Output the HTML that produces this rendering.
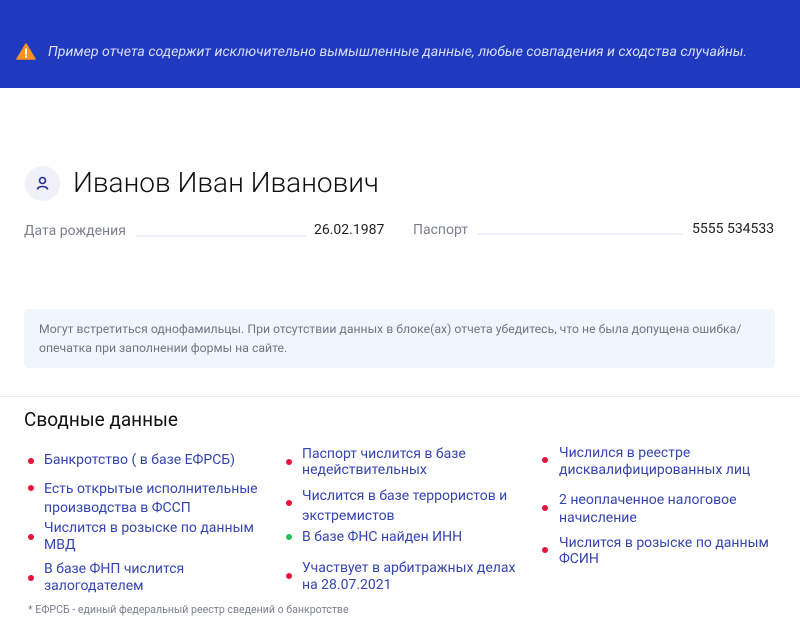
<!DOCTYPE html><html><head><meta charset="utf-8"><style>
*{margin:0;padding:0;box-sizing:border-box}
body{width:800px;height:631px;background:#fff;font-family:Roboto,"Liberation Sans",sans-serif;position:relative;overflow:hidden}
.a{position:absolute;white-space:nowrap}
.l{font-size:14px;color:#3444b0;line-height:18px}
.d{position:absolute;width:6px;height:6px;border-radius:50%;background:#e8123c}
</style></head><body>
<div class="a" style="left:0;top:0;width:800px;height:88px;background:#1f3abe"></div>
<svg class="a" style="left:16px;top:43px" width="20" height="17" viewBox="0 0 20 17"><path d="M10 1 L19 16 L1 16 Z" fill="#f7931e" stroke="#f7931e" stroke-linejoin="round" stroke-width="1.5"/><rect x="9" y="5.5" width="2" height="6" fill="#fff"/><rect x="9" y="12.5" width="2" height="2" fill="#fff"/></svg>
<div class="a" style="left:48px;top:44px;font-size:14.15px;font-style:italic;color:#d8defa">Пример отчета содержит исключительно вымышленные данные, любые совпадения и сходства случайны.</div>
<div class="a" style="left:25px;top:166px;width:35px;height:35px;border-radius:50%;background:#f0f1f8"></div>
<svg class="a" style="left:34px;top:175px" width="17" height="17" viewBox="0 0 17 17"><circle cx="8.5" cy="5.5" r="3" fill="none" stroke="#2a2a9a" stroke-width="1.6"/><path d="M3.5 14.5 C3.5 10.5 13.5 10.5 13.5 14.5" fill="none" stroke="#2a2a9a" stroke-width="1.6"/></svg>
<div class="a" style="left:73px;top:166px;font-size:28px;font-weight:300;color:#111;line-height:34px">Иванов Иван Иванович</div>
<div class="a" style="left:24px;top:223px;font-size:14px;color:#7a7f8c">Дата рождения</div>
<div class="a" style="left:136px;top:235px;width:170px;height:2px;background:#eef0fa"></div>
<div class="a" style="left:314px;top:222px;font-size:14px;color:#222">26.02.1987</div>
<div class="a" style="left:413px;top:222px;font-size:14px;color:#7a7f8c">Паспорт</div>
<div class="a" style="left:478px;top:233px;width:205px;height:2px;background:#eef0fa"></div>
<div class="a" style="left:692px;top:221px;font-size:14px;color:#222">5555 534533</div>
<div class="a" style="left:24px;top:309px;width:751px;height:59px;background:#eff6fe;border-radius:4px"></div>
<div class="a" style="left:39px;top:320px;font-size:12.25px;color:#6f7584;line-height:19px">Могут встретиться однофамильцы. При отсутствии данных в блоке(ах) отчета убедитесь, что не была допущена ошибка/<br>опечатка при заполнении формы на сайте.</div>
<div class="a" style="left:0;top:396px;width:800px;height:1px;background:#ececf0"></div>
<div class="a" style="left:24px;top:408px;font-size:19px;color:#111;line-height:24px">Сводные данные</div>

<div class="d" style="left:28px;top:458px"></div>
<div class="a l" style="left:44px;top:451px">Банкротство ( в базе ЕФРСБ)</div>
<div class="d" style="left:28px;top:485px"></div>
<div class="a l" style="left:44px;top:480px">Есть открытые исполнительные</div>
<div class="a l" style="left:44px;top:499px">производства в ФССП</div>
<div class="d" style="left:28px;top:534px"></div>
<div class="a l" style="left:44px;top:519px">Числится в розыске по данным</div>
<div class="a l" style="left:44px;top:536px">МВД</div>
<div class="d" style="left:28px;top:575px"></div>
<div class="a l" style="left:44px;top:560px">В базе ФНП числится</div>
<div class="a l" style="left:44px;top:577px">залогодателем</div>

<div class="d" style="left:286px;top:459px"></div>
<div class="a l" style="left:302px;top:445px">Паспорт числится в базе</div>
<div class="a l" style="left:302px;top:461px">недействительных</div>
<div class="d" style="left:286px;top:500px"></div>
<div class="a l" style="left:302px;top:487px">Числится в базе террористов и</div>
<div class="a l" style="left:302px;top:507px">экстремистов</div>
<div class="d" style="left:286px;top:534px;background:#22c25a"></div>
<div class="a l" style="left:302px;top:528px">В базе ФНС найден ИНН</div>
<div class="d" style="left:286px;top:573px"></div>
<div class="a l" style="left:302px;top:559px">Участвует в арбитражных делах</div>
<div class="a l" style="left:302px;top:576px">на 28.07.2021</div>

<div class="d" style="left:542px;top:457px"></div>
<div class="a l" style="left:559px;top:444px">Числился в реестре</div>
<div class="a l" style="left:559px;top:461px">дисквалифицированных лиц</div>
<div class="d" style="left:542px;top:505px"></div>
<div class="a l" style="left:559px;top:491px">2 неоплаченное налоговое</div>
<div class="a l" style="left:559px;top:509px">начисление</div>
<div class="d" style="left:542px;top:547px"></div>
<div class="a l" style="left:559px;top:534px">Числится в розыске по данным</div>
<div class="a l" style="left:559px;top:550px">ФСИН</div>

<div class="a" style="left:28px;top:603px;font-size:10.6px;color:#7a7f8c">* ЕФРСБ - единый федеральный реестр сведений о банкротстве</div>
</body></html>
